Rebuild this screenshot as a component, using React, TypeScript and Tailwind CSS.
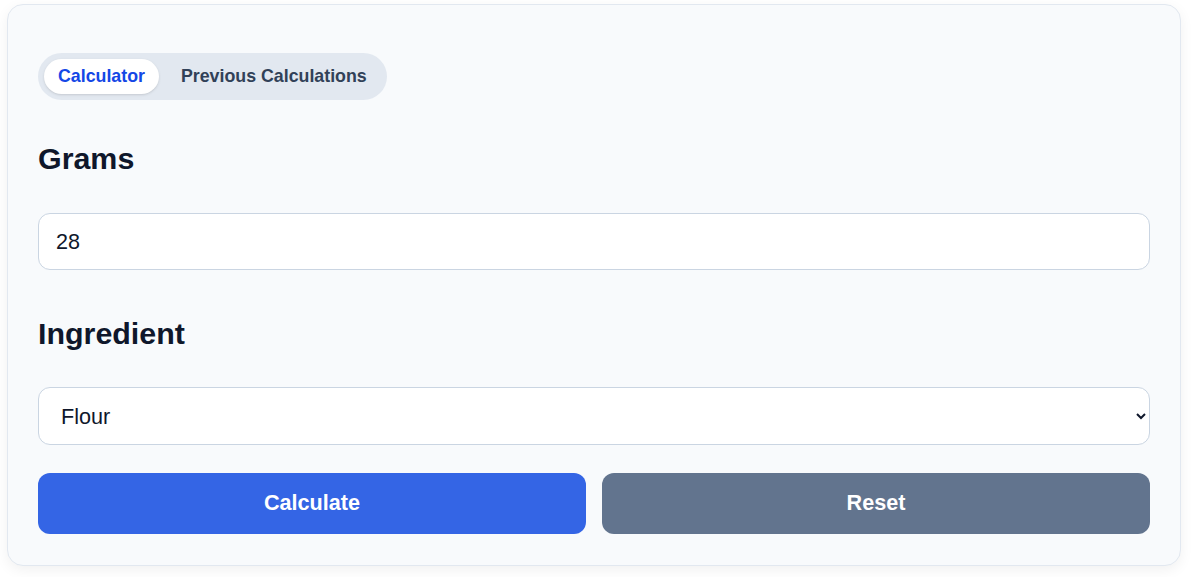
import { useState } from "react";

const font = { fontFamily: '"Liberation Sans", Arial, sans-serif' };

export default function App() {
  const [tab, setTab] = useState<"calc" | "history">("calc");
  const [grams, setGrams] = useState("28");
  const [ingredient, setIngredient] = useState("Flour");

  return (
    <div className="min-h-[577px] bg-white pl-[7px] pt-[4px]" style={font}>
      <div className="w-[1174px] rounded-2xl border border-slate-200 bg-slate-50 px-[30px] pt-[48px] pb-[31px] shadow-[0_4px_14px_rgba(0,0,0,0.06)]">
        {/* tabs */}
        <div className="inline-flex gap-2 rounded-full bg-slate-200 px-[6px] py-[6px]">
          <button
            onClick={() => setTab("calc")}
            className={`h-[35px] rounded-full px-[14px] text-[17.8px] font-bold ${
              tab === "calc" ? "bg-white text-blue-700 shadow-sm" : "text-slate-700"
            }`}
          >
            Calculator
          </button>
          <button
            onClick={() => setTab("history")}
            className={`h-[35px] rounded-full px-[14px] text-[17.8px] font-bold ${
              tab === "history" ? "bg-white text-blue-700 shadow-sm" : "text-slate-700"
            }`}
          >
            Previous Calculations
          </button>
        </div>

        <h2 className="mt-[40px] text-[30.4px] leading-9 font-bold text-slate-900">Grams</h2>
        <input
          type="text"
          value={grams}
          onChange={(e) => setGrams(e.target.value)}
          className="mt-[37px] block h-[57px] w-full rounded-xl border border-slate-300 bg-white px-[17px] text-[21.6px] text-slate-900 outline-none"
        />

        <h2 className="mt-[45px] text-[30.4px] leading-9 font-bold text-slate-900">Ingredient</h2>
        <select
          value={ingredient}
          onChange={(e) => setIngredient(e.target.value)}
          className="mt-[36px] block h-[58px] w-full rounded-xl border border-slate-300 bg-white pl-[18px] pr-[8px] text-[21.6px] text-slate-900 outline-none"
        >
          <option>Flour</option>
          <option>Sugar</option>
          <option>Butter</option>
          <option>Rice</option>
        </select>

        <div className="mt-[28px] grid grid-cols-2 gap-4">
          <button className="h-[61px] rounded-xl bg-[#3465e5] text-[21.6px] font-bold text-white">
            Calculate
          </button>
          <button className="h-[61px] rounded-xl bg-slate-500 text-[21.6px] font-bold text-white">
            Reset
          </button>
        </div>
      </div>
    </div>
  );
}
